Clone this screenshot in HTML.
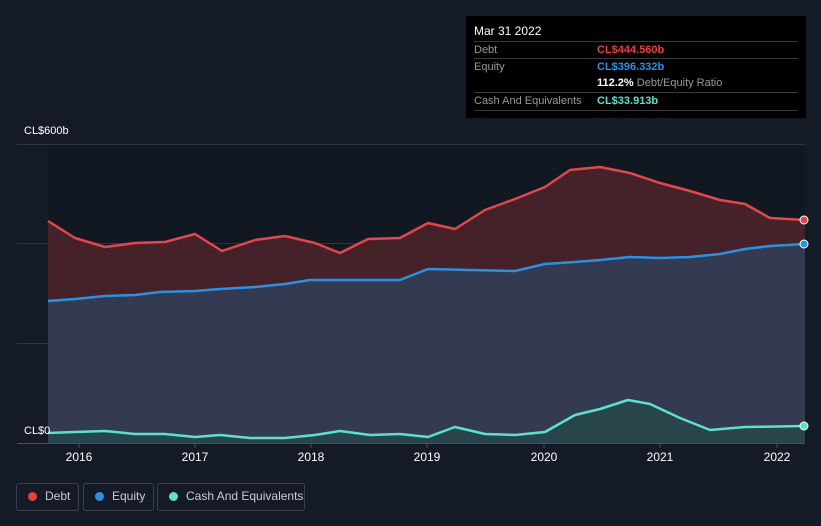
<!DOCTYPE html>
<html><head><style>
body{margin:0;width:821px;height:526px;background:#151b26;font-family:"Liberation Sans",sans-serif;overflow:hidden;position:relative}
.t{position:absolute;color:#fff;font-size:11px}
.tip{position:absolute;left:466px;top:16px;width:340px;height:102px;background:#000;}
.tip .r{position:absolute;left:8px;width:324px;border-top:1px solid #3a3a3a;height:17px;line-height:17px;font-size:11px;color:#999}
.leg{position:absolute;top:483px;height:26px;border:1px solid #3a404c;border-radius:3px;color:#ccc;font-size:12px;line-height:25px}
.leg i{position:absolute;left:11px;top:8px;width:9px;height:9px;border-radius:50%}
</style></head><body>
<svg width="821" height="526" style="position:absolute;left:0;top:0">
<rect x="48" y="144" width="757" height="299" fill="#121821"/>
<g stroke="#2e3440" stroke-width="1"><line x1="17" y1="144.5" x2="805" y2="144.5"/><line x1="17" y1="243.5" x2="805" y2="243.5"/><line x1="17" y1="343.5" x2="805" y2="343.5"/></g>
<polygon fill="#45222a" points="48,221 75,238 105,247 135,243 165,242 195,234 222,251 255,240 285,236 315,243 340,253 368,239 400,238 428,223 455,229 485,210 515,199 545,187 570,170 600,167 630,173 660,183 690,191 720,200 745,204 770,218 805,220 805,443 48,443"/>
<polygon fill="#343a52" points="48,301 75,299 105,296 135,295 160,292 195,291 220,289 255,287 285,284 310,280 350,280 400,280 428,269 470,270 515,271 545,264 575,262 600,260 630,257 660,258 690,257 720,254 745,249 770,246 805,244 805,443 48,443"/>
<polygon fill="#27454a" points="48,433 75,432 105,431 135,434 165,434 195,437 220,435 250,438 285,438 315,435 340,431 370,435 400,434 428,437 455,427 485,434 515,435 545,432 575,415 600,409 628,400 650,404 680,418 710,430 745,427 805,426 805,443 48,443"/>
<g fill="none" stroke-width="2.5" stroke-linejoin="round">
<polyline stroke="#e0484c" points="48,221 75,238 105,247 135,243 165,242 195,234 222,251 255,240 285,236 315,243 340,253 368,239 400,238 428,223 455,229 485,210 515,199 545,187 570,170 600,167 630,173 660,183 690,191 720,200 745,204 770,218 805,220"/>
<polyline stroke="#2c90e0" points="48,301 75,299 105,296 135,295 160,292 195,291 220,289 255,287 285,284 310,280 350,280 400,280 428,269 470,270 515,271 545,264 575,262 600,260 630,257 660,258 690,257 720,254 745,249 770,246 805,244"/>
<polyline stroke="#5ee0cc" points="48,433 75,432 105,431 135,434 165,434 195,437 220,435 250,438 285,438 315,435 340,431 370,435 400,434 428,437 455,427 485,434 515,435 545,432 575,415 600,409 628,400 650,404 680,418 710,430 745,427 805,426"/>
</g>
<circle cx="804" cy="220" r="4" fill="#e0484c" stroke="#fff" stroke-width="1"/>
<circle cx="804" cy="244" r="4" fill="#2c90e0" stroke="#fff" stroke-width="1"/>
<circle cx="804" cy="426" r="4" fill="#5ee0cc" stroke="#fff" stroke-width="1"/>
<line x1="17" y1="443.5" x2="805" y2="443.5" stroke="#4a505c"/>
<g stroke="#4a505c"><line x1="79" y1="443" x2="79" y2="448"/><line x1="195" y1="443" x2="195" y2="448"/><line x1="311" y1="443" x2="311" y2="448"/><line x1="427" y1="443" x2="427" y2="448"/><line x1="544" y1="443" x2="544" y2="448"/><line x1="660" y1="443" x2="660" y2="448"/><line x1="777" y1="443" x2="777" y2="448"/></g>
<g fill="#fff" font-size="12" text-anchor="middle" font-family="Liberation Sans,sans-serif"><text x="79" y="461">2016</text><text x="195" y="461">2017</text><text x="311" y="461">2018</text><text x="427" y="461">2019</text><text x="544" y="461">2020</text><text x="660" y="461">2021</text><text x="777" y="461">2022</text></g>
</svg>
<div class="t" style="left:24px;top:125px">CL$600b</div>
<div class="t" style="left:24px;top:425px">CL$0</div>
<div class="tip">
<div style="position:absolute;left:8px;top:8px;color:#fff;font-size:12px">Mar 31 2022</div>
<div class="r" style="top:25px">Debt<span style="position:absolute;left:123px;color:#e8403f;font-weight:bold">CL$444.560b</span></div>
<div class="r" style="top:42px">Equity<span style="position:absolute;left:123px;color:#2c90e0;font-weight:bold">CL$396.332b</span></div>
<div class="r" style="top:59px;border-top:none"><span style="position:absolute;left:123px"><b style="color:#fff">112.2%</b> Debt/Equity Ratio</span></div>
<div class="r" style="top:76px;border-bottom:1px solid #3a3a3a">Cash And Equivalents<span style="position:absolute;left:123px;color:#5ee0cc;font-weight:bold">CL$33.913b</span></div>
</div>
<div class="leg" style="left:16px;width:61px"><i style="background:#e8403f"></i><span style="position:absolute;left:28px">Debt</span></div>
<div class="leg" style="left:83px;width:69px"><i style="background:#2c90e0"></i><span style="position:absolute;left:28px">Equity</span></div>
<div class="leg" style="left:157px;width:146px"><i style="background:#5ee0cc"></i><span style="position:absolute;left:28px">Cash And Equivalents</span></div>
</body></html>
